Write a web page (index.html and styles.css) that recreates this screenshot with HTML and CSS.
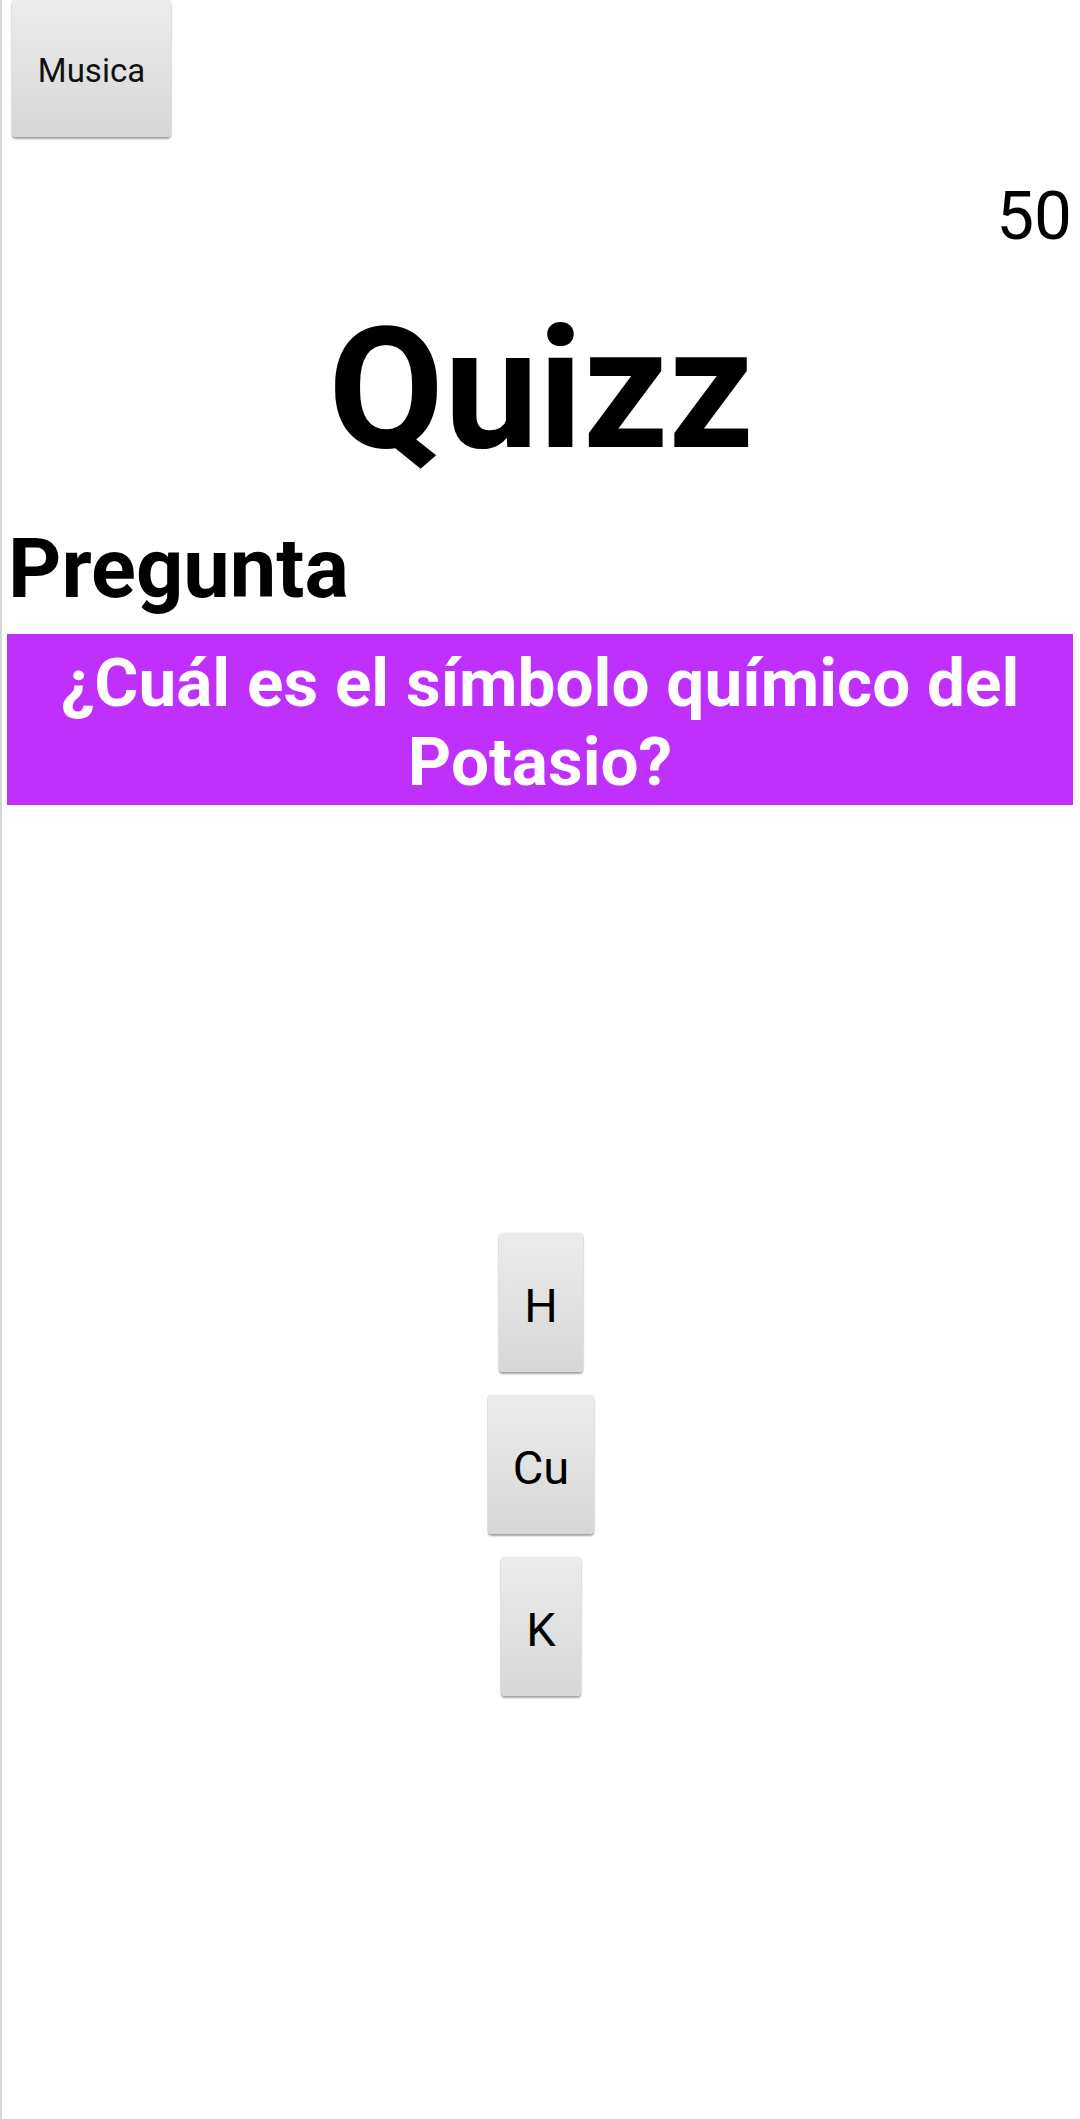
FILE: index.html
```html
<!DOCTYPE html>
<html lang="es">
<head>
<meta charset="utf-8">
<title>Quizz</title>
<link rel="stylesheet" href="styles.css">
</head>
<body>
<div class="screen">
  <div class="toolbar">
    <button class="btn btn-music">Musica</button>
  </div>
  <div class="score">50</div>
  <h1 class="title">Quizz</h1>
  <h2 class="label">Pregunta</h2>
  <div class="question">¿Cuál es el símbolo químico del Potasio?</div>
  <div class="answers">
    <button class="btn btn-answer">H</button>
    <button class="btn btn-answer">Cu</button>
    <button class="btn btn-answer">K</button>
  </div>
</div>
</body>
</html>
```

FILE: styles.css
```css
html, body {
  margin: 0;
  padding: 0;
  background: #ffffff;
}

body {
  font-family: Roboto, "Liberation Sans", sans-serif;
  color: #000;
}

.screen {
  min-height: 2119px;
  box-sizing: border-box;
  border-left: 2px solid #d6d6d6;
  display: flex;
  flex-direction: column;
}

.toolbar {
  display: flex;
  padding-left: 10px;
}

.btn {
  font-family: Roboto, "Liberation Sans", sans-serif;
  color: #111;
  border: none;
  border-radius: 4px;
  background: linear-gradient(#ececec, #d7d7d7);
  box-shadow: 0 2px 2px rgba(0, 0, 0, 0.35), 0 0 1px rgba(0, 0, 0, 0.35);
  display: flex;
  align-items: center;
  justify-content: center;
  padding: 0;
  margin: 0;
  box-sizing: border-box;
}

.btn-music {
  width: 159px;
  height: 137px;
  padding-top: 4px;
  font-size: 33px;
}

.score {
  margin-top: 39px;
  font-size: 67.5px;
  line-height: 80px;
  text-align: right;
  padding-right: 8px;
}

.title {
  margin: 50px 0 0;
  font-size: 168px;
  line-height: 168px;
  font-weight: 700;
  text-align: center;
}

.label {
  margin: 49px 0 0;
  padding-left: 6px;
  font-size: 83px;
  line-height: 92px;
  font-weight: 700;
}

.question {
  margin: 19px 7px 0 5px;
  padding: 9px 20px 4px;
  background: #c030fc;
  color: #fff;
  font-size: 67.5px;
  line-height: 79px;
  font-weight: 700;
  text-align: center;
}

.answers {
  margin-top: 428px;
  display: flex;
  flex-direction: column;
  align-items: center;
  gap: 23px;
}

.btn-answer {
  height: 139px;
  padding: 5px 25px 0;
  font-size: 47px;
  color: #000;
}
```
